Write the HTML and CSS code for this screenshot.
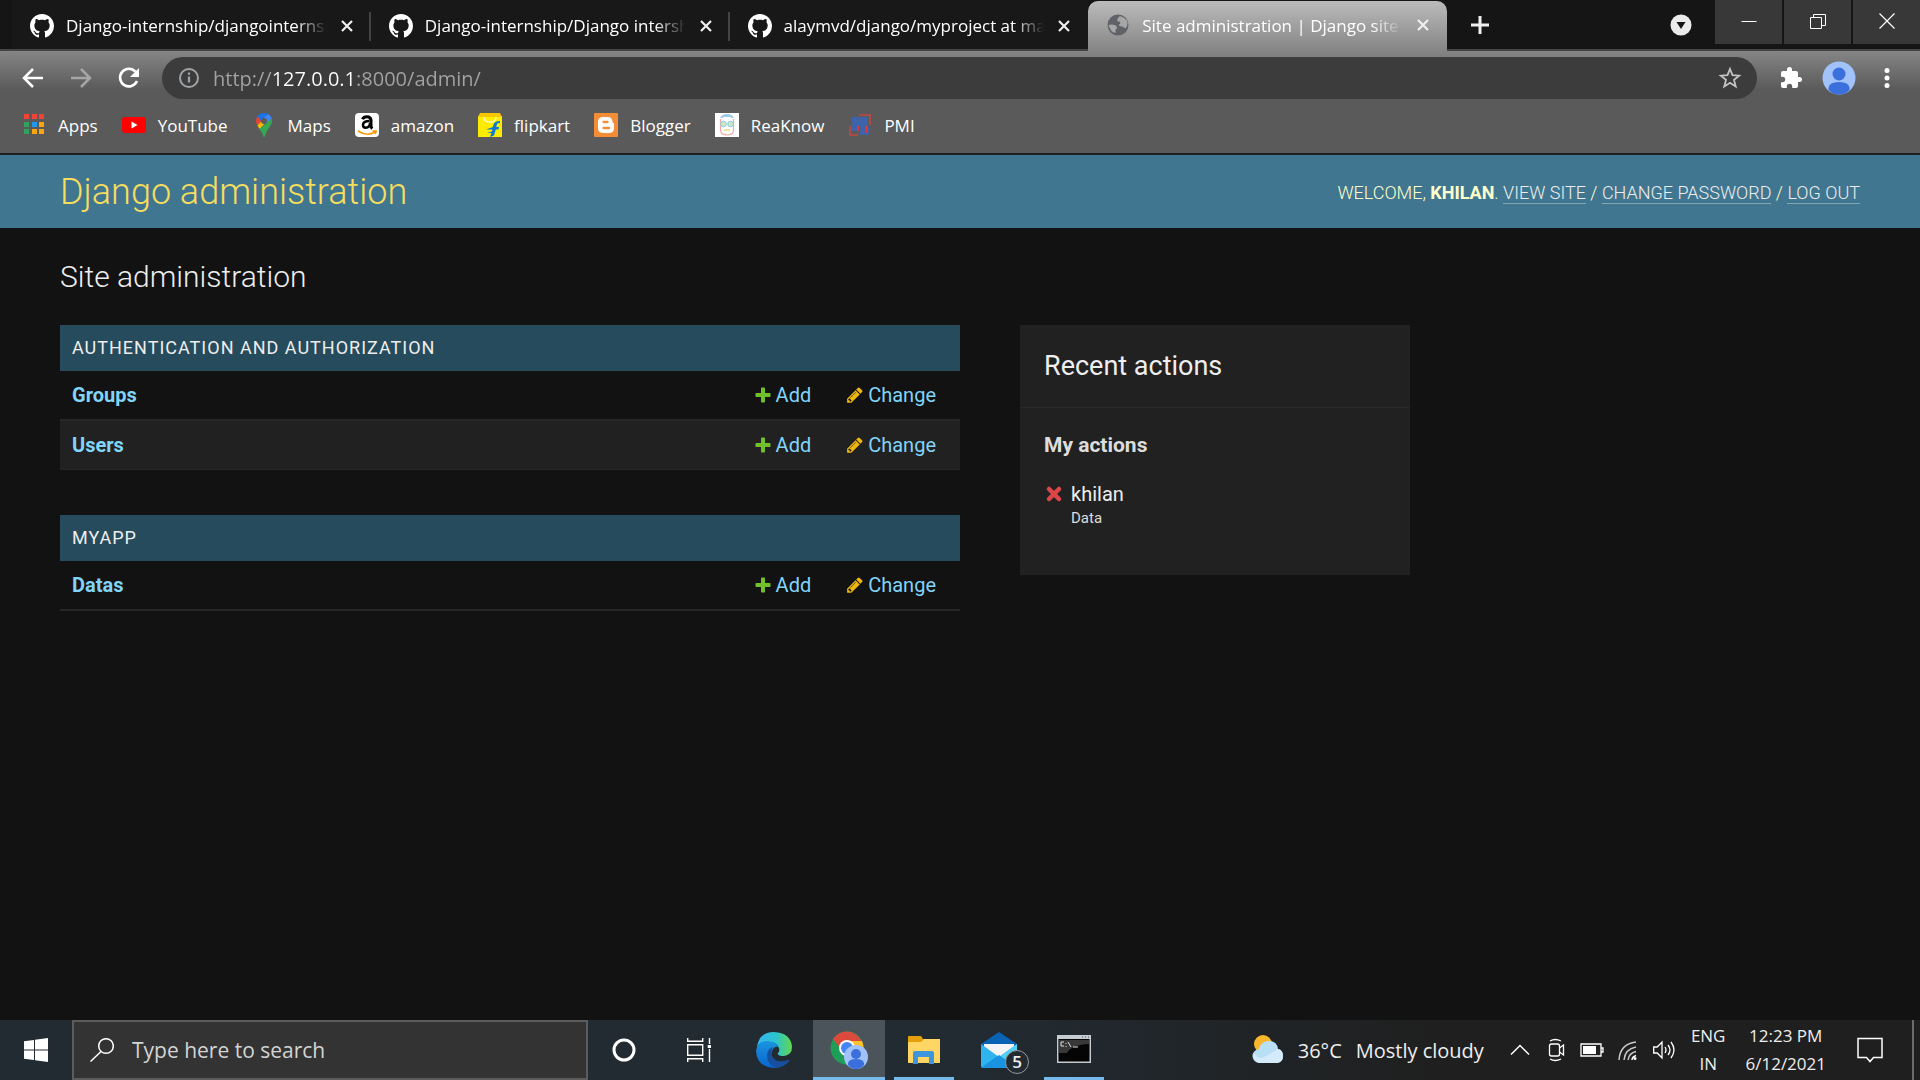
FILE: index.html
```html
<!DOCTYPE html>
<html lang="en">
<head>
<meta charset="utf-8">
<meta name="viewport" content="width=device-width, initial-scale=1">
<title>Site administration | Django site admin</title>
<link rel="stylesheet" href="styles.css">
</head>
<body>
<svg class="defs" aria-hidden="true">
  <symbol id="github" viewBox="0 0 16 16"><path d="M8 0C3.58 0 0 3.58 0 8c0 3.54 2.29 6.53 5.47 7.59.4.07.55-.17.55-.38 0-.19-.01-.82-.01-1.49-2.01.37-2.53-.49-2.69-.94-.09-.23-.48-.94-.82-1.13-.28-.15-.68-.52-.01-.53.63-.01 1.08.58 1.23.82.72 1.21 1.87.87 2.33.66.07-.52.28-.87.51-1.07-1.78-.2-3.64-.89-3.64-3.95 0-.87.31-1.59.82-2.15-.08-.2-.36-1.02.08-2.12 0 0 .67-.21 2.2.82.64-.18 1.32-.27 2-.27s1.36.09 2 .27c1.53-1.04 2.2-.82 2.2-.82.44 1.1.16 1.92.08 2.12.51.56.82 1.27.82 2.15 0 3.07-1.87 3.75-3.65 3.95.29.25.54.73.54 1.48 0 1.07-.01 1.93-.01 2.2 0 .21.15.46.55.38A8.01 8.01 0 0 0 16 8c0-4.42-3.58-8-8-8z" fill="#fff"/></symbol>
  <symbol id="close" viewBox="0 0 14 14"><path d="M2 2l10 10M12 2L2 12" stroke="#f0f0f0" stroke-width="2.2"/></symbol>
  <symbol id="add" viewBox="0 0 16 16"><path d="M6 1.2Q6 .5 6.700 .5H9.300Q10 .5 10 1.200V6H14.800Q15.500 6 15.500 6.700V9.300Q15.500 10 14.800 10H10V14.800Q10 15.500 9.300 15.500H6.700Q6 15.500 6 14.800V10H1.200Q.5 10 .5 9.300V6.700Q.5 6 1.200 6H6z" fill="#70bf2b"/></symbol>
  <symbol id="pencil" viewBox="128 100 1560 1580"><path d="M491 1536l91-91-235-235-91 91v107h128v128h107zm523-928q0-22-22-22-10 0-17 7l-542 542q-7 7-7 17 0 22 22 22 10 0 17-7l542-542q7-7 7-17zm-54-192l416 416-832 832h-416v-416zm683 96q0 53-37 90l-166 166-416-416 166-165q36-38 90-38 53 0 91 38l235 234q37 39 37 91z" fill="#efb80b"/></symbol>
  <symbol id="delete" viewBox="-1 -1 16 16"><path d="M3 3l8 8M11 3l-8 8" stroke="#dd4646" stroke-width="3.600" stroke-linecap="round"/></symbol>
</svg>

<header class="browser">
  <div class="tabstrip">
    <div class="tabs">
      <div class="tab"><svg class="ico24"><use href="#github"/></svg><span class="tab-title">Django-internship/djangointernship</span><button class="tab-close" aria-label="Close tab"><svg class="ico14"><use href="#close"/></svg></button></div>
      <div class="tab"><svg class="ico24"><use href="#github"/></svg><span class="tab-title">Django-internship/Django intership</span><button class="tab-close" aria-label="Close tab"><svg class="ico14"><use href="#close"/></svg></button></div>
      <div class="tab"><svg class="ico24"><use href="#github"/></svg><span class="tab-title">alaymvd/django/myproject at master</span><button class="tab-close" aria-label="Close tab"><svg class="ico14"><use href="#close"/></svg></button></div>
      <div class="tab tab-active"><svg class="ico24" viewBox="0 0 24 24"><circle cx="12" cy="12" r="10.500" fill="#5f6368"/><path d="M2.500 12q4-1 7 .5 2 1 1.500 3l-1.500 1v3.500q-5-1-7-8zM14 3q-3 2-3 4.500 1 1.500 3 1 1 2-1.500 3.500 2 2 4 1.500l3 2q3-4 1.500-8Q18.500 4 14 3z" fill="#a6a6a6"/></svg><span class="tab-title">Site administration | Django site admin</span><button class="tab-close" aria-label="Close tab"><svg class="ico14"><use href="#close"/></svg></button></div>
    </div>
    <button class="newtab" aria-label="New tab"><svg class="ico24" viewBox="0 0 24 24"><path d="M12 3v18M3 12h18" stroke="#f0f0f0" stroke-width="3"/></svg></button>
    <button class="tabsearch" aria-label="Search tabs"><svg class="ico24" viewBox="0 0 24 24"><circle cx="12" cy="12" r="10.500" fill="#ebebeb"/><path d="M7.500 9h9l-4.500 7z" fill="#141414"/></svg></button>
    <div class="winbuttons">
      <button aria-label="Minimize"><svg class="ico16" viewBox="0 0 16 16"><path d="M.5 8.500h15" stroke="#fff"/></svg></button>
      <button aria-label="Restore"><svg class="ico16" viewBox="0 0 16 16"><path d="M.5 4.500h11v11H.5zM3.500 4.500v-3h12v11h-4" fill="none" stroke="#fff"/></svg></button>
      <button aria-label="Close window"><svg class="ico16" viewBox="0 0 16 16"><path d="M.5 .5l15 15M15.500 .5l-15 15" stroke="#fff" stroke-width="1.200"/></svg></button>
    </div>
  </div>

  <div class="toolbar">
    <button class="nav" aria-label="Back"><svg class="ico24" viewBox="0 0 24 24"><path d="M22 12H4M12 3l-9 9 9 9" fill="none" stroke="#fff" stroke-width="2.500"/></svg></button>
    <button class="nav" aria-label="Forward"><svg class="ico24" viewBox="0 0 24 24"><path d="M2 12h18M12 3l9 9-9 9" fill="none" stroke="#a6a6a6" stroke-width="2.500"/></svg></button>
    <button class="nav" aria-label="Reload"><svg class="ico24" viewBox="0 0 24 24"><path d="M20 15a8.800 8.800 0 1 1-1.500-9.300" fill="none" stroke="#fff" stroke-width="2.600"/><path d="M22 2v9h-9z" fill="#fff"/></svg></button>
    <div class="address">
      <svg class="ico24" viewBox="0 0 24 24"><circle cx="12" cy="12" r="9" fill="none" stroke="#a0a4a8" stroke-width="2"/><path d="M12 10.500v6M12 6.500v2.200" stroke="#a0a4a8" stroke-width="2.200"/></svg>
      <input class="url" type="text" aria-label="Address" value="http://127.0.0.1:8000/admin/">
      <button aria-label="Bookmark this page"><svg class="ico24" viewBox="0 0 24 24"><path d="M12 3l2.500 6.200 6.700.5-5.200 4.200 1.700 6.600L12 16.800l-5.700 3.700L8 13.900 2.800 9.700l6.700-.5z" fill="none" stroke="#c4c4c4" stroke-width="1.800"/></svg></button>
    </div>
    <div class="extras">
      <button aria-label="Extensions"><svg class="ico24" viewBox="0 0 24 24"><path d="M20.500 11H19V7a2 2 0 0 0-2-2h-4V3.500a2.500 2.500 0 0 0-5 0V5H4a2 2 0 0 0-2 2v3.800h1.500a2.700 2.700 0 0 1 0 5.400H2V20a2 2 0 0 0 2 2h3.800v-1.500a2.700 2.700 0 0 1 5.400 0V22H17a2 2 0 0 0 2-2v-4h1.500a2.500 2.500 0 0 0 0-5z" fill="#fff"/></svg></button>
      <button aria-label="Profile"><svg class="ico34" viewBox="0 0 34 34"><circle cx="17" cy="17" r="16.500" fill="#a1c2fa"/><circle cx="17" cy="13" r="6.500" fill="#3b6fdc"/><path d="M6.500 29v-2Q7 21 17 21t10.500 6v2Q23 33.500 17 33.500T6.500 29z" fill="#3b6fdc"/></svg></button>
      <button aria-label="Menu"><svg class="ico24" viewBox="0 0 24 24"><circle cx="12" cy="4.500" r="2.500" fill="#fff"/><circle cx="12" cy="12" r="2.500" fill="#fff"/><circle cx="12" cy="19.500" r="2.500" fill="#fff"/></svg></button>
    </div>
  </div>

  <nav class="bookmarks" aria-label="Bookmarks">
    <a href="#"><svg class="ico24" viewBox="0 0 24 24"><path d="M2 1h5v5H2zM10 1h5v5h-5zM17 1h5v5h-5z" fill="#f44336"/><path d="M2 9h5v5H2zM2 16h5v5H2z" fill="#34a35a"/><path d="M10 9h5v5h-5z" fill="#2196f3"/><path d="M17 9h5v5h-5zM10 16h5v5h-5zM17 16h5v5h-5z" fill="#f9a60b"/></svg>Apps</a>
    <a href="#"><svg class="ico24" viewBox="0 0 24 24"><rect y="4" width="24" height="16" rx="3" fill="#f00"/><path d="M9.500 8.500v7l6-3.500z" fill="#fff"/></svg>YouTube</a>
    <a href="#"><svg class="ico24" viewBox="0 0 24 24"><path d="M5.600 3.200L10 7.500 5.500 12.500Q4 10.500 4 8q0-2.700 1.600-4.800z" fill="#ea4335"/><path d="M5.600 3.200Q8 0 12 0q2 0 4 1l-5 6-2 1z" fill="#1a73e8"/><path d="M16 1q3 1.500 3.700 4.500L14 11 12 4.500z" fill="#4285f4"/><path d="M5.500 12.500L10 7.500l3 3-5.500 5.500z" fill="#fbbc04"/><path d="M7.500 16L19.700 5.500Q21 9 18.500 12.500 14 18 12.500 24h-1Q10.500 19.500 7.500 16z" fill="#34a853"/><circle cx="12" cy="8" r="3" fill="#5a5a5a"/></svg>Maps</a>
    <a href="#"><svg class="ico24" viewBox="0 0 24 24"><rect width="24" height="24" rx="4" fill="#fff"/><path d="M7.500 6.200Q8.500 3.700 12 3.700t4 3.300v6q0 1.500 1.300 2.700" fill="none" stroke="#000" stroke-width="3"/><path d="M14.500 8Q8 8 8 12q0 2.700 2.700 2.700Q15 14.500 15 10" fill="none" stroke="#000" stroke-width="2.500"/><path d="M3 18q9 6 17 1M17.500 18h3.500l-.7 3" fill="none" stroke="#ff9900" stroke-width="1.600"/></svg>amazon</a>
    <a href="#"><svg class="ico24" viewBox="0 0 24 24"><path d="M0 3h24v21H0z" fill="#ffec00"/><path d="M2 0h20l2 4H0z" fill="#f7c600"/><path d="M6 4q0 5 6 5t6-5" fill="none" stroke="#fff8b0" stroke-width="1.500"/><path d="M22 10.200q-2-.6-3 .8l-.7 3H21l-.5 2.500h-2.700L16 22.500 12 24l1.500-4H9l5-1.500.4-2H8l6.800-2.500.7-2.500Q16.500 8 22 8z" fill="#0878d8"/></svg>flipkart</a>
    <a href="#"><svg class="ico24" viewBox="0 0 24 24"><rect width="24" height="24" rx="1" fill="#f58d36"/><path d="M9 4h5q4 0 4.500 4.500Q18.500 10 20 10.500V15q0 5-5 5H9q-5 0-5-5V9q0-5 5-5z" fill="#fff"/><path d="M9.500 9h4M9.500 15h5.500" stroke="#f58d36" stroke-width="2.300" stroke-linecap="round"/></svg>Blogger</a>
    <a href="#"><svg class="ico24" viewBox="0 0 24 24"><path d="M0 0h24v24H0z" fill="#fff"/><path d="M5.500 6V17q0 5 6.500 5t6.500-5V6" fill="none" stroke="#f3a9a9" stroke-width="1.200"/><path d="M6 5q2-3 6-3t6 3M8 3h8" fill="none" stroke="#9dcbea" stroke-width="2"/><circle cx="8.500" cy="11" r="2.800" fill="#cdeac0" stroke="#8fc9e6"/><circle cx="15.500" cy="11" r="2.800" fill="#cdeac0" stroke="#8fc9e6"/><path d="M9 17h6" stroke="#eee3a0" stroke-width="2"/></svg>ReaKnow</a>
    <a href="#"><svg class="ico24" viewBox="0 0 24 24"><path d="M11 2h11v10M2 13v9h8" fill="none" stroke="#c44747" stroke-width="1.600"/><path d="M4 4h16v9h1v9h-9v-8H9v4H3v-6h1z" fill="#3f63a8"/><path d="M10 13v5M18.500 13v7" stroke="#e63632" stroke-width="2"/></svg>PMI</a>
  </nav>
</header>

<div class="site">
  <header class="site-header">
    <a class="brand" href="#">Django administration</a>
    <div class="usertools">Welcome, <strong>khilan</strong>. <a href="#">View site</a> / <a href="#">Change password</a> / <a href="#">Log out</a></div>
  </header>
  <main class="content">
    <h1>Site administration</h1>
    <div class="columns">
      <div class="modules">
        <table class="module">
          <caption><a href="#">Authentication and Authorization</a></caption>
          <tbody>
            <tr><th scope="row"><a href="#">Groups</a></th><td><a class="action" href="#"><svg class="ico16"><use href="#add"/></svg>Add</a></td><td><a class="action" href="#"><svg class="ico16"><use href="#pencil"/></svg>Change</a></td></tr>
            <tr><th scope="row"><a href="#">Users</a></th><td><a class="action" href="#"><svg class="ico16"><use href="#add"/></svg>Add</a></td><td><a class="action" href="#"><svg class="ico16"><use href="#pencil"/></svg>Change</a></td></tr>
          </tbody>
        </table>
        <table class="module">
          <caption><a href="#">Myapp</a></caption>
          <tbody>
            <tr><th scope="row"><a href="#">Datas</a></th><td><a class="action" href="#"><svg class="ico16"><use href="#add"/></svg>Add</a></td><td><a class="action" href="#"><svg class="ico16"><use href="#pencil"/></svg>Change</a></td></tr>
          </tbody>
        </table>
      </div>
      <aside class="recent">
        <h2>Recent actions</h2>
        <h3>My actions</h3>
        <ul>
          <li><svg class="ico20"><use href="#delete"/></svg><div>khilan<small>Data</small></div></li>
        </ul>
      </aside>
    </div>
  </main>
</div>

<footer class="taskbar">
  <button class="task" aria-label="Start"><svg class="ico24" viewBox="0 0 24 24"><path d="M0 3.300L10 2v9.500H0zM11 1.800L24 0v11.500H11zM0 12.500h10V22L0 20.700zM11 12.500h13V24l-13-1.800z" fill="#fff"/></svg></button>
  <label class="search"><svg class="ico24" viewBox="0 0 24 24"><circle cx="16" cy="8" r="7.300" fill="none" stroke="#fff" stroke-width="1.500"/><path d="M11 13.500L.5 23.500" stroke="#fff" stroke-width="1.500"/></svg><input type="text" placeholder="Type here to search" aria-label="Type here to search"></label>
  <div class="apps">
    <button class="task" aria-label="Cortana"><svg class="ico24" viewBox="0 0 24 24"><circle cx="12" cy="12" r="10" fill="none" stroke="#fff" stroke-width="3"/></svg></button>
    <button class="task" aria-label="Task view"><svg class="ico24" viewBox="0 0 24 24"><path d="M.7 0v3.300h15V0M.7 6.700h15v10.600h-15zM.7 24v-3.300h15V24M22.500 0v6M22.500 11v13" fill="none" stroke="#fff" stroke-width="1.400"/><path d="M20.700 7h3.300v3h-3.300z" fill="#fff"/></svg></button>
    <button class="task" aria-label="Edge"><svg class="ico36" viewBox="0 0 36 36"><defs><linearGradient id="e1"><stop stop-color="#35b8f0"/><stop offset=".55" stop-color="#2cc3cd"/><stop offset="1" stop-color="#62d84a"/></linearGradient><linearGradient id="e2" x2="0" y2="1"><stop stop-color="#1a95e0"/><stop offset="1" stop-color="#0a64cf"/></linearGradient></defs><path d="M1 15Q3 0 18 0q17 1 18 15 0 8-8 9-7 0-6-3 2-2 1-5-2-6-10-6Q4 10 1 15z" fill="url(#e1)"/><path d="M0 19Q1 9 11 9q9 0 11 6-3-1-5 2-5 8 4 13 6 2 12-1-6 7-15 7Q1 35 0 19z" fill="url(#e2)"/><path d="M17 15q-5 1-6 8 0 10 9 13 8-1 13-7 1-2-1-1-12 4-16-4-2-4 1-9z" fill="#174f9c"/></svg></button>
    <button class="task task-open task-active" aria-label="Chrome"><svg class="ico38" viewBox="0 0 38 38"><circle cx="17" cy="17" r="16.500" fill="#1e9e57"/><path d="M3 8Q8 .5 17 .5T31 9l1 2H17q-6 0-7 6z" fill="#dc4a3d"/><path d="M17 10h15q5 12-6 21l-9-1 6-10z" fill="#fbc22d"/><circle cx="17" cy="17" r="8" fill="#fff"/><circle cx="17" cy="17" r="6" fill="#4285f4"/><circle cx="26" cy="26" r="12" fill="#a1c2fa"/><circle cx="26" cy="23" r="5" fill="#3b6fdc"/><path d="M18 34v-2q1-4 8-4t8 4v2q-3 4-8 4t-8-4z" fill="#3b6fdc"/></svg></button>
    <button class="task task-open" aria-label="File Explorer"><svg class="ico32" viewBox="0 0 32 32"><path d="M0 3q0-1 1-1h12l2 3h16q1 0 1 1v22q0 1-1 1H1q-1 0-1-1z" fill="#e3a008"/><path d="M0 8h13l3-3h16v23q0 1-1 1H1q-1 0-1-1z" fill="#ffd563"/><path d="M5 30V19q0-2 2-2h17q2 0 2 2v11h-5v-7H10v7z" fill="#3d95dc"/></svg></button>
    <button class="task" aria-label="Mail, 5 unread"><svg class="ico36" viewBox="0 0 36 36"><path d="M0 12L18 0l18 12v6H0z" fill="#0a62b4"/><path d="M3 12h30v12H3z" fill="#f4f4f6"/><path d="M0 12l18 13L36 12v22q0 2-2 2H2q-2 0-2-2z" fill="#2fb4ef"/><path d="M18 25L36 12v22L18 25z" fill="#50d2f5"/><path d="M1 35l17-12 17 12q0 1-1 1H2z" fill="#1a94e0"/></svg><span class="badge">5</span></button>
    <button class="task task-open" aria-label="Command Prompt"><svg class="ico34" viewBox="0 0 34 34"><path d="M.7 2.700h32.600v26.600H.7z" fill="#050505" stroke="#c5ccd2" stroke-width="1.500"/><path d="M1 3h32v3H1z" fill="#c5ccd2"/><path d="M2 7h30v4Q14 12 10 20H2z" fill="#383838"/><path d="M7 9H4v4h3M9 10v1M9 13v1M11 9l3 5M16 14h5" fill="none" stroke="#ddd"/><path d="M25 4h1M28 4h1M31 4h1" stroke="#345"/></svg></button>
  </div>
  <div class="tray">
    <div class="weather"><svg class="ico32" viewBox="0 0 32 32"><circle cx="11" cy="10" r="9" fill="#f8b62c"/><path d="M8 29a7 7 0 0 1-1-14Q9 7 17 7q8 0 9 8 5 1 5 7t-6 7z" fill="#b9dff7"/><path d="M8 29a7 7 0 0 1-6-10q4 7 10 4t14-8q5 1 5 7t-6 7z" fill="#d3ebfa"/></svg><span>36°C</span><span>Mostly cloudy</span></div>
    <svg class="ico24" viewBox="0 0 24 24"><path d="M3 16.500L12 7.500l9 9" fill="none" stroke="#fff" stroke-width="1.500"/></svg>
    <svg class="ico24" viewBox="0 0 24 24"><rect x="5.500" y="6" width="10" height="12" rx="2" fill="none" stroke="#fff" stroke-width="1.300"/><path d="M15.500 10l4-3v10l-4-3M6 3q5-3 11 0M6 21q5 3 11 0" fill="none" stroke="#fff" stroke-width="1.300"/></svg>
    <svg class="ico24" viewBox="0 0 24 24"><path d="M1 6h20v12H1zM21.500 10H23v4h-1.500" fill="none" stroke="#fff" stroke-width="1.300"/><path d="M3 8h13v8H3z" fill="#fff"/></svg>
    <svg class="ico24" viewBox="0 0 24 24"><path d="M3 22Q4 6 20 4M8 22q1-11 12-13M12 22q1-7 8-8.500" fill="none" stroke="#ccc" stroke-width="1.400"/><path d="M16 22q0-3 4-4.500" fill="none" stroke="#fff" stroke-width="1.400"/><circle cx="19" cy="20.500" r="1.500" fill="#fff"/></svg>
    <svg class="ico24" viewBox="0 0 24 24"><path d="M1.700 9h3.500L10 4v16l-4.800-5H1.700zM13 9q2 3 0 6M16 7q4 5 0 10M19 4q6 8 0 16" fill="none" stroke="#fff" stroke-width="1.300"/></svg>
    <div class="stack lang"><span>ENG</span><span>IN</span></div>
    <div class="stack"><span>12:23 PM</span><span>6/12/2021</span></div>
    <button class="notif" aria-label="Notifications"><svg class="ico28" viewBox="0 0 28 28"><path d="M2 2.500h24v19h-8.500L14 25.500l-3.500-4H2z" fill="none" stroke="#fff" stroke-width="1.500"/></svg></button>
  </div>
</footer>
</body>
</html>
```
FILE: styles.css
```css
* { box-sizing: border-box; }

body {
  margin: 0;
  min-height: 100vh;
  display: flex;
  flex-direction: column;
  background: #121212;
  color: #eee;
  font-family: Roboto, sans-serif;
  font-size: 20px;
}

a { color: inherit; text-decoration: none; }
button { border: 0; padding: 0; background: none; color: inherit; font: inherit; display: flex; align-items: center; justify-content: center; }
input { border: 0; padding: 0; margin: 0; background: none; outline: none; min-width: 0; font: inherit; color: inherit; }
svg { flex: none; display: block; }
.defs { position: absolute; width: 0; height: 0; }
.ico14 { width: 14px; height: 14px; }
.ico16 { width: 16px; height: 16px; }
.ico20 { width: 20px; height: 20px; }
.ico24 { width: 24px; height: 24px; }
.ico28 { width: 28px; height: 28px; }
.ico32 { width: 32px; height: 32px; }
.ico34 { width: 34px; height: 34px; }
.ico36 { width: 36px; height: 36px; }
.ico38 { width: 38px; height: 38px; }

/* Browser frame */
.browser {
  font-family: "Open Sans", "Noto Sans", sans-serif;
  font-size: 17px;
  color: #fff;
  background: linear-gradient(#858585 51px, #5a5a5a 90px);
  border-bottom: 2px solid #1f1f1f;
}
.tabstrip { display: flex; height: 51px; background: #151515; border-bottom: 2px solid #444; padding-left: 12px; }
.tabs { display: flex; flex: 0 1 1435px; min-width: 0; }
.tab {
  flex: 1 1 0;
  min-width: 0;
  display: flex;
  align-items: center;
  gap: 12px;
  height: 49px;
  padding: 2px 16px 0 18px;
  background: linear-gradient(#444, #444) right 12px / 2px 29px no-repeat #181818;
}
.tab:nth-child(3) { background: #181818; }
.tab-title {
  flex: 1;
  overflow: hidden;
  white-space: nowrap;
  -webkit-mask-image: linear-gradient(90deg, #000 88%, transparent);
  mask-image: linear-gradient(90deg, #000 88%, transparent);
}
.tab-active {
  height: 50px;
  margin-top: 1px;
  padding-top: 0;
  padding-bottom: 2px;
  border-radius: 10px 10px 0 0;
  background: linear-gradient(#bbb, #858585);
}
.tab-close { width: 16px; height: 24px; }
.newtab { width: 40px; margin-left: 13px; }
.tabsearch { width: 40px; margin: 0 14px 0 auto; }
.winbuttons { display: flex; gap: 2px; }
.winbuttons button { width: 67px; height: 44px; padding-bottom: 2px; background: #383838; }

.toolbar { display: flex; align-items: center; gap: 22px; height: 54px; padding: 0 21px 0 20px; }
.nav { width: 26px; }
.address {
  flex: 1;
  display: flex;
  align-items: center;
  gap: 12px;
  height: 42px;
  margin-left: -2px;
  padding: 0 15px;
  border-radius: 21px;
  background: #3c3c3c;
  font-size: 20px;
}
.url {
  flex: 1;
  height: 42px;
  color: #a3a3a3;
  background: linear-gradient(90deg, #a3a3a3 59px, #fff 59px 141px, #a3a3a3 141px);
  -webkit-background-clip: text;
  background-clip: text;
  -webkit-text-fill-color: transparent;
}
.extras { display: flex; align-items: center; gap: 19px; }

.bookmarks { display: flex; align-items: center; gap: 24px; height: 48px; padding: 0 22px 8px; }
.bookmarks a { display: flex; align-items: center; gap: 12px; }

/* Admin site */
.site { flex: 1; }
.site-header {
  display: flex;
  align-items: center;
  justify-content: space-between;
  padding: 15px 60px 14px;
  background: #417690;
}
.brand { font-size: 36px; line-height: 44px; font-weight: 300; color: #f5dd5d; }
.usertools { font-size: 18px; font-weight: 300; text-transform: uppercase; color: #ffc; }
.usertools strong { font-weight: 700; }
.usertools a { color: #eee; border-bottom: 1px solid #83a6b7; }

.content { padding: 30px 60px; }
h1 { margin: 0 0 30px; font-size: 30px; line-height: 37px; font-weight: 300; }
.columns { display: flex; align-items: flex-start; gap: 60px; }
.modules { flex: 0 1 900px; display: flex; flex-direction: column; gap: 45px; }
.module { width: 100%; border-collapse: separate; border-spacing: 0; line-height: 24px; }
.module caption { padding: 12px; text-align: left; background: #264b5d; font-size: 18px; line-height: 22px; letter-spacing: 1px; text-transform: uppercase; }
.module th, .module td { padding: 12px; text-align: left; border-bottom: 2px solid #272727; color: #81d4fa; }
.module td { width: 1px; padding-right: 24px; white-space: nowrap; }
.module tr:nth-child(even) > * { background: #212121; border-bottom-width: 1px; }
.action { display: flex; align-items: center; gap: 5px; }

.recent { flex: 0 1 390px; background: #212121; padding-bottom: 45px; }
.recent h2 { margin: 0; padding: 24px; font-size: 27px; line-height: 34px; font-weight: 400; border-bottom: 1px solid #292929; }
.recent h3 { margin: 0; padding: 24px 24px 12px; font-size: 21px; line-height: 26px; color: #ddd; }
.recent ul { margin: 0; padding: 12px 24px 0; list-style: none; }
.recent li { display: flex; gap: 7px; line-height: 24px; }
.recent li svg { margin-top: 2px; }
.recent small { display: block; font-size: 15px; color: #ddd; }

/* Taskbar */
.taskbar {
  display: flex;
  height: 60px;
  font-family: "Open Sans", "Noto Sans", sans-serif;
  background: linear-gradient(90deg, #222b32 50%, #1f1f1f 75%);
}
.task { position: relative; width: 72px; height: 60px; }
.search {
  flex: 0 1 516px;
  display: flex;
  align-items: center;
  gap: 18px;
  padding: 0 16px;
  border: 2px solid #5c5c5c;
  background: #333;
  font-size: 21px;
}
.search input { flex: 1; }
.search input::placeholder { color: #d4d4d4; }
.apps { display: flex; gap: 3px; }
.task-open::after { content: ""; position: absolute; left: 6px; right: 6px; bottom: 0; height: 3px; background: #76b9ed; }
.task-active { background: #4c545b; }
.task-active::after { left: 0; right: 0; }
.badge {
  position: absolute;
  right: 6px;
  bottom: 6px;
  width: 24px;
  height: 24px;
  border: 1px solid #999;
  border-radius: 50%;
  background: #222b32;
  font-size: 17px;
  line-height: 22px;
  font-weight: 600;
}
.tray { display: flex; align-items: center; gap: 12px; margin-left: auto; margin-right: 6px; border-right: 2px solid #6b6b6b; }
.weather { display: flex; align-items: center; gap: 14px; margin-right: 12px; font-size: 20px; }
.stack { display: flex; flex-direction: column; align-items: center; font-size: 17px; line-height: 28px; }
.lang { margin: 0 8px 0 3px; }
.notif { margin: 0 28px 0 18px; }
```
